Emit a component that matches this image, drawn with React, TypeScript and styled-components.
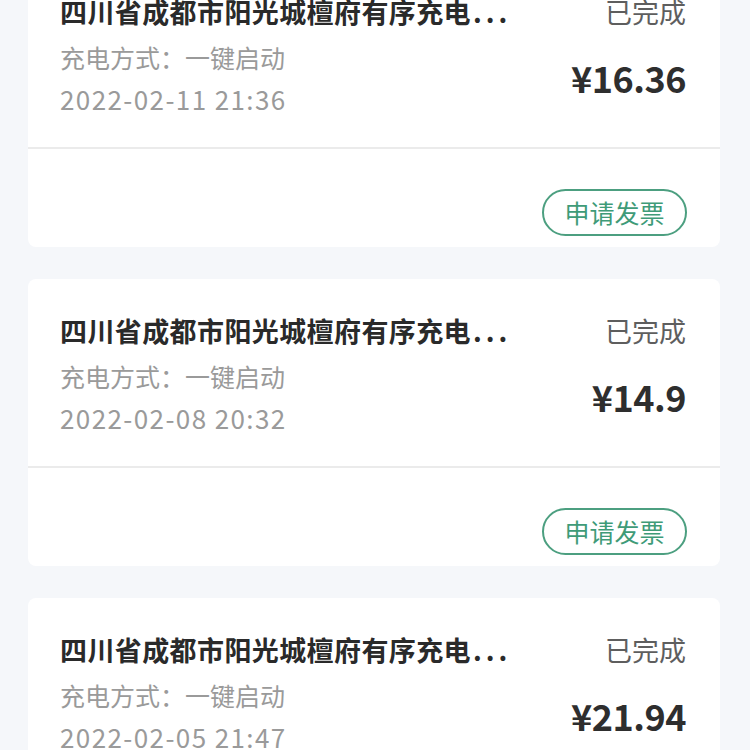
import React from "react";
import styled, { createGlobalStyle } from "styled-components";

const GlobalStyle = createGlobalStyle`
  html, body {
    margin: 0;
    padding: 0;
    background: #f5f7fa;
    overflow: hidden;
  }
  body {
    font-family: "Noto Sans CJK SC", "Noto Sans", sans-serif;
  }
`;

const Page = styled.div`
  width: 750px;
  height: 750px;
  overflow: hidden;
  background: #f5f7fa;
`;

const List = styled.div`
  display: flex;
  flex-direction: column;
  gap: 32px;
  margin-top: -40px;
  padding: 0 30px 0 28px;
`;

const Card = styled.div`
  background: #ffffff;
  border-radius: 8px;
  display: flex;
  flex-direction: column;
`;

const Body = styled.div`
  display: flex;
  justify-content: space-between;
  padding: 36px 34px 0 32px;
  height: 189px;
  box-sizing: border-box;
  border-bottom: 2px solid #ebebeb;
`;

const Info = styled.div`
  display: flex;
  flex-direction: column;
`;

const Title = styled.div`
  font-size: 27px;
  font-weight: 700;
  color: #2a2a2a;
  line-height: 32px;
  letter-spacing: 0.4px;
  white-space: nowrap;
`;

const Dots = styled.span`
  letter-spacing: 4px;
  margin-left: 2px;
`;

const Meta = styled.div<{ $gap: number; $spacing?: number; $size?: number }>`
  font-size: ${(p) => p.$size ?? 25}px;
  color: #9a9a9a;
  line-height: 32px;
  letter-spacing: ${(p) => p.$spacing ?? 0}px;
  margin-top: ${(p) => p.$gap}px;
  white-space: nowrap;
`;

const Side = styled.div`
  display: flex;
  flex-direction: column;
  align-items: flex-end;
`;

const Status = styled.div`
  font-size: 27px;
  color: #5e5e5e;
  line-height: 32px;
`;

const Amount = styled.div`
  font-size: 36px;
  font-weight: 700;
  color: #2e2e2e;
  line-height: 44px;
  letter-spacing: -0.5px;
  margin-top: 27px;
`;

const Footer = styled.div`
  display: flex;
  justify-content: flex-end;
  padding: 40px 33px 11px 0;
`;

const InvoiceButton = styled.button`
  width: 145px;
  height: 47px;
  box-sizing: border-box;
  border: 2px solid #4c9f80;
  border-radius: 24px;
  background: #ffffff;
  color: #3f9b78;
  font-family: "Noto Sans CJK SC", "Noto Sans", sans-serif;
  font-size: 25px;
  line-height: 1;
  padding: 0;
  display: flex;
  align-items: center;
  justify-content: center;
`;

type Order = { date: string; amount: string };

const orders: Order[] = [
  { date: "2022-02-11 21:36", amount: "¥16.36" },
  { date: "2022-02-08 20:32", amount: "¥14.9" },
  { date: "2022-02-05 21:47", amount: "¥21.94" },
];

export default function App() {
  return (
    <Page>
      <GlobalStyle />
      <List>
        {orders.map((o) => (
          <Card key={o.date}>
            <Body>
              <Info>
                <Title>
                  四川省成都市阳光城檀府有序充电<Dots>...</Dots>
                </Title>
                <Meta $gap={13}>充电方式：一键启动</Meta>
                <Meta $gap={10} $size={26} $spacing={1.4}>
                  {o.date}
                </Meta>
              </Info>
              <Side>
                <Status>已完成</Status>
                <Amount>{o.amount}</Amount>
              </Side>
            </Body>
            <Footer>
              <InvoiceButton>申请发票</InvoiceButton>
            </Footer>
          </Card>
        ))}
      </List>
    </Page>
  );
}
